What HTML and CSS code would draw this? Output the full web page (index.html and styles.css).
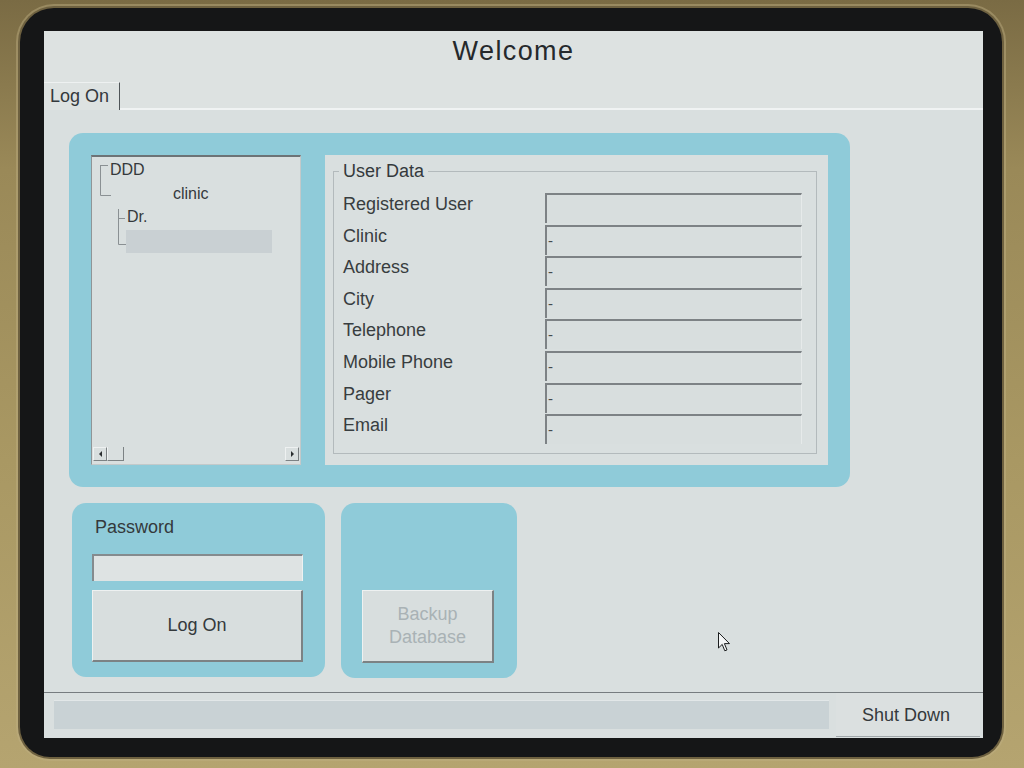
FILE: index.html
```html
<!DOCTYPE html>
<html lang="en">
<head>
<meta charset="utf-8">
<title>Welcome</title>
<link rel="stylesheet" href="styles.css">
</head>
<body>
<div class="bezel">
  <div class="screen">
    <header class="title">Welcome</header>
    <nav class="tabs">
      <div class="tab">Log On</div>
      <div class="tab-rest"></div>
    </nav>
    <main class="content">
      <section class="panel main-panel">
        <div class="tree">
          <svg class="tree-lines" width="60" height="100" viewBox="0 0 60 100" aria-hidden="true">
            <path d="M8.5 8 V38.5 M8.5 8.5 H16 M8.5 38.5 H19 M26.5 52 V87.5 M26.5 61.5 H33 M26.5 87.5 H34" stroke="#8a9093" stroke-width="1" fill="none"/>
          </svg>
          <div class="tree-body">
            <div class="node n1">DDD</div>
            <div class="node n2">clinic</div>
            <div class="node n3">Dr.</div>
            <div class="node n4"><span class="sel"></span></div>
          </div>
          <div class="hscroll">
            <span class="sbtn left"><i></i></span>
            <span class="thumb"></span>
            <span class="track"></span>
            <span class="sbtn right"><i></i></span>
          </div>
        </div>
        <div class="userdata">
          <fieldset class="ud">
            <legend>User Data</legend>
            <div class="ud-grid">
              <div class="lbl">Registered User</div><div class="field"></div>
              <div class="lbl">Clinic</div><div class="field">-</div>
              <div class="lbl">Address</div><div class="field">-</div>
              <div class="lbl">City</div><div class="field">-</div>
              <div class="lbl">Telephone</div><div class="field">-</div>
              <div class="lbl">Mobile Phone</div><div class="field">-</div>
              <div class="lbl">Pager</div><div class="field">-</div>
              <div class="lbl">Email</div><div class="field">-</div>
            </div>
          </fieldset>
        </div>
      </section>
      <div class="bottom-row">
        <section class="panel pw-panel">
          <div class="pw-label">Password</div>
          <div class="pw-input"></div>
          <div class="btn logon">Log On</div>
        </section>
        <section class="panel backup-panel">
          <div class="btn backup">Backup<br>Database</div>
        </section>
      </div>
    </main>
    <footer class="status">
      <div class="status-field"></div>
      <div class="shutdown">Shut Down</div>
    </footer>
    <svg class="cursor" width="13" height="21" viewBox="0 0 13 21" aria-hidden="true">
      <path d="M0.5 0.5 L0.5 16 L4.2 12.4 L6.8 18.8 L9 17.9 L6.4 11.6 L11.5 11.6 Z" fill="#f4f6f6" stroke="#1b1d1e" stroke-width="1"/>
    </svg>
  </div>
</div>
</body>
</html>
```

FILE: styles.css
```css
* { box-sizing: border-box; }
html, body { margin: 0; }
body {
  width: 1024px;
  height: 768px;
  overflow: hidden;
  padding: 8px 22px 11px 20px;
  background: linear-gradient(180deg, #7a6b44 0%, #9a8958 22%, #a99863 60%, #b5a470 100%);
  font-family: "Liberation Sans", Arial, sans-serif;
  color: #34393c;
}
.bezel {
  width: 982px;
  height: 749px;
  background: #151617;
  border-radius: 34px 34px 30px 30px;
  padding: 23px 19px 19px 24px;
  box-shadow: 0 0 0 2px #6e6140, 0 0 0 4px rgba(190,175,130,0.45);
}
.screen {
  width: 939px;
  height: 707px;
  background: #d9dfdf;
  display: flex;
  flex-direction: column;
  position: relative;
  overflow: hidden;
}
.title {
  height: 51px;
  text-align: center;
  font-size: 27px;
  letter-spacing: 1.4px;
  line-height: 40px;
  color: #25292c;
  background: #dde2e1;
}
.tabs {
  display: flex;
  height: 28px;
  background: #dde2e1;
}
.tab {
  width: 76px;
  height: 28px;
  padding-left: 6px;
  font-size: 18px;
  line-height: 26px;
  border-right: 1px solid #4f5558;
  border-top: 1px solid #eef1f1;
}
.tab-rest {
  flex: 1;
  border-bottom: 2px solid #f0f3f3;
}
.content {
  padding: 23px 0 0 25px;
  display: flex;
  flex-direction: column;
  gap: 16px;
}
.panel {
  background: #8fcbd9;
  border-radius: 14px;
}
.main-panel {
  width: 781px;
  height: 354px;
  padding: 22px;
  display: flex;
  gap: 24px;
}
.tree {
  width: 210px;
  height: 310px;
  position: relative;
  background: #d9dfdf;
  border-top: 2px solid #6d7376;
  border-left: 1px solid #8f9597;
  border-right: 1px solid #c3c9ca;
  border-bottom: 1px solid #c3c9ca;
  display: flex;
  flex-direction: column;
}
.tree-lines {
  position: absolute;
  left: 0;
  top: 0;
}
.tree-body {
  flex: 1;
  padding-top: 1px;
  font-size: 16px;
  color: #34393c;
}
.node { height: 23.5px; line-height: 23px; }
.n1 { padding-left: 18px; }
.n2 { padding-left: 81px; }
.n3 { padding-left: 35px; }
.n4 { padding-left: 34px; padding-top: 1px; }
.sel {
  display: block;
  width: 146px;
  height: 23px;
  background: #c9d0d3;
}
.hscroll {
  height: 17px;
  display: flex;
  align-items: flex-start;
  padding: 0 1px 2px 1px;
}
.sbtn {
  width: 14px;
  height: 14px;
  border-top: 1px solid #eef1f1;
  border-left: 1px solid #eef1f1;
  border-right: 1px solid #7c8284;
  border-bottom: 1px solid #7c8284;
  display: flex;
  align-items: center;
  justify-content: center;
}
.sbtn i {
  width: 0;
  height: 0;
  border-top: 3px solid transparent;
  border-bottom: 3px solid transparent;
}
.sbtn.left i { border-right: 3px solid #2a2e30; }
.sbtn.right i { border-left: 3px solid #2a2e30; }
.thumb {
  width: 17px;
  height: 14px;
  border-left: 1px solid #eef1f1;
  border-right: 1px solid #7c8284;
  border-bottom: 1px solid #7c8284;
}
.track { flex: 1; }
.userdata {
  width: 503px;
  height: 310px;
  background: #d9dfdf;
  padding: 6px 11px 11px 8px;
}
.ud {
  margin: 0;
  height: 293px;
  border: 1px solid #b3babc;
  padding: 11px 13px 7px 9px;
}
.ud legend {
  margin-left: -4px;
  padding: 0 4px;
  font-size: 18px;
  line-height: 21px;
  color: #34393c;
}
.ud-grid {
  display: grid;
  grid-template-columns: 202px 257px;
  grid-auto-rows: 31.6px;
}
.lbl {
  font-size: 18px;
  line-height: 22px;
  color: #383d40;
}
.field {
  height: 30px;
  border-top: 2px solid #7d8285;
  border-left: 2px solid #7d8285;
  border-right: 1px solid #e6eaea;
  background: #d8dede;
  font-size: 15px;
  line-height: 28px;
  padding-left: 1px;
  color: #444a4d;
}
.bottom-row {
  display: flex;
  gap: 16px;
  padding-left: 3px;
}
.pw-panel {
  width: 253px;
  height: 174px;
  padding: 14px 22px 15px 20px;
  display: flex;
  flex-direction: column;
}
.pw-label {
  font-size: 18px;
  line-height: 21px;
  padding-left: 3px;
}
.pw-input {
  margin-top: 16px;
  height: 27px;
  background: #dee3e3;
  border-top: 2px solid #858b8e;
  border-left: 2px solid #858b8e;
  border-right: 1px solid #eef1f1;
}
.btn {
  background: #d8dede;
  border-top: 1px solid #eef1f1;
  border-left: 1px solid #eef1f1;
  border-right: 2px solid #7c8284;
  border-bottom: 2px solid #7c8284;
  display: flex;
  align-items: center;
  justify-content: center;
  text-align: center;
  font-size: 18px;
}
.logon {
  margin-top: 9px;
  height: 72px;
}
.backup-panel {
  width: 176px;
  height: 175px;
  padding: 87px 23px 15px 21px;
}
.backup {
  height: 73px;
  line-height: 23px;
  color: #a9b2b5;
}
.status {
  margin-top: auto;
  height: 46px;
  border-top: 1px solid #767c7f;
  display: flex;
}
.status-field {
  margin: 7px 0 0 10px;
  width: 775px;
  height: 29px;
  background: #c9d2d5;
  border-top: 1px solid #e2e7e8;
}
.shutdown {
  margin-left: 7px;
  width: 144px;
  height: 44px;
  padding-left: 26px;
  font-size: 18px;
  line-height: 44px;
  border-bottom: 1px solid #a0a7aa;
  background: #dbe0e0;
}
.cursor {
  position: absolute;
  left: 674px;
  top: 601px;
}
```
